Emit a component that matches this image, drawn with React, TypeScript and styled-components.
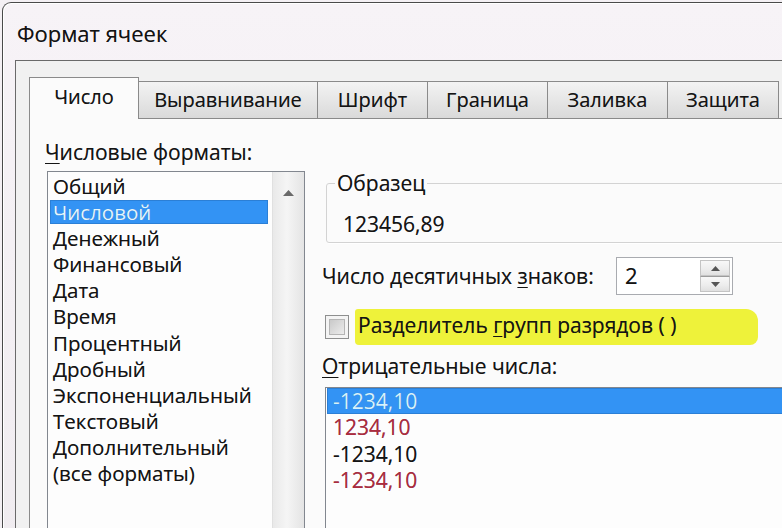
import React from 'react'
import styled, { createGlobalStyle } from 'styled-components'

const GlobalStyle = createGlobalStyle`
  html,
  body {
    margin: 0;
    padding: 0;
    overflow: hidden;
    background: #f4f0f4;
  }

  body {
    font-family: 'Open Sans', 'Noto Sans', 'Liberation Sans', sans-serif;
    color: #141414;
    text-shadow: 0 0 0.6px rgba(0, 0, 0, 0.45);
  }
`

type Tone = 'selected' | 'red' | 'black'

const TABS = [
  { label: 'Число', width: 110 },
  { label: 'Выравнивание', width: 180 },
  { label: 'Шрифт', width: 111 },
  { label: 'Граница', width: 121 },
  { label: 'Заливка', width: 121 },
  { label: 'Защита', width: 112 }
]

const FORMATS = [
  'Общий',
  'Числовой',
  'Денежный',
  'Финансовый',
  'Дата',
  'Время',
  'Процентный',
  'Дробный',
  'Экспоненциальный',
  'Текстовый',
  'Дополнительный',
  '(все форматы)'
]

const NEGATIVES: { text: string; tone: Tone }[] = [
  { text: '-1234,10', tone: 'selected' },
  { text: '1234,10', tone: 'red' },
  { text: '-1234,10', tone: 'black' },
  { text: '-1234,10', tone: 'red' }
]

const TriangleUp = ({ w = 10, h = 5, color = '#5a5a5a' }: { w?: number; h?: number; color?: string }) => (
  <svg width={w} height={h} viewBox={`0 0 ${w} ${h}`}>
    <polygon points={`0,${h} ${w / 2},0 ${w},${h}`} fill={color} />
  </svg>
)

const TriangleDown = ({ w = 8, h = 4, color = '#5a5a5a' }: { w?: number; h?: number; color?: string }) => (
  <svg width={w} height={h} viewBox={`0 0 ${w} ${h}`}>
    <polygon points={`0,0 ${w},0 ${w / 2},${h}`} fill={color} />
  </svg>
)

const App = () => {
  return (
    <>
      <GlobalStyle />
      <Window>
        <TitleBar>Формат ячеек</TitleBar>
        <Client>
          <TabStrip>
            {TABS.map((tab, i) => (
              <Tab key={tab.label} $active={i === 0} $width={tab.width}>
                {tab.label}
              </Tab>
            ))}
          </TabStrip>
          <Panel>
            <LeftColumn>
              <FieldLabel>
                <Mnemonic>Ч</Mnemonic>исловые форматы:
              </FieldLabel>
              <FormatList>
                <FormatItems>
                  {FORMATS.map((name, i) => (
                    <FormatItem key={name} $selected={i === 1}>
                      {name}
                    </FormatItem>
                  ))}
                </FormatItems>
                <ScrollBar>
                  <TriangleUp w={11} h={6} color="#6a6a6a" />
                </ScrollBar>
              </FormatList>
            </LeftColumn>

            <RightColumn>
              <GroupBox>
                <GroupLegend>Образец</GroupLegend>
                <SampleValue>123456,89</SampleValue>
              </GroupBox>

              <DigitsRow>
                <DigitsLabel>
                  Число десятичных <Mnemonic>з</Mnemonic>наков:
                </DigitsLabel>
                <SpinBox>
                  <SpinValue>2</SpinValue>
                  <SpinButtons>
                    <SpinButton>
                      <TriangleUp w={9} h={5} color="#555" />
                    </SpinButton>
                    <SpinButton>
                      <TriangleDown w={9} h={5} color="#555" />
                    </SpinButton>
                  </SpinButtons>
                </SpinBox>
              </DigitsRow>

              <CheckRow>
                <CheckBox />
                <Highlight>
                  Разделитель <Mnemonic>г</Mnemonic>рупп разрядов ( )
                </Highlight>
              </CheckRow>

              <NegativeLabel>
                <Mnemonic>О</Mnemonic>трицательные числа:
              </NegativeLabel>
              <NegativeList>
                {NEGATIVES.map((item, i) => (
                  <NegativeItem key={i} $tone={item.tone}>
                    {item.text}
                  </NegativeItem>
                ))}
              </NegativeList>
            </RightColumn>
          </Panel>
        </Client>
      </Window>
    </>
  )
}

const Window = styled.div`
  width: 820px;
  height: 560px;
  margin: 2px 0 0 2px;
  border-top: 1px solid #4a4a4a;
  border-left: 1px solid #4a4a4a;
  border-top-left-radius: 9px;
  background: linear-gradient(180deg, #f7f3f7 0%, #f0ecf0 100%);
  box-shadow: inset 1px 1px 0 #ffffff;
  display: flex;
  flex-direction: column;
  overflow: hidden;
`

const TitleBar = styled.div`
  flex-shrink: 0;
  height: 57px;
  box-sizing: border-box;
  padding: 3px 0 0 14px;
  display: flex;
  align-items: center;
  font-size: 22px;
  color: #121212;
`

const Client = styled.div`
  flex: 1;
  min-height: 0;
  margin-left: 12px;
  border-top: 1px solid #6a6a6a;
  border-left: 1px solid #6a6a6a;
  background: #f1f1f1;
  padding: 16px 0 0 13px;
  display: flex;
  flex-direction: column;
`

const TabStrip = styled.div`
  flex-shrink: 0;
  display: flex;
  align-items: flex-end;
  height: 42px;
`

const Tab = styled.div<{ $active: boolean; $width: number }>`
  width: ${(p) => p.$width}px;
  height: ${(p) => (p.$active ? 42 : 38)}px;
  box-sizing: border-box;
  margin-left: -1px;
  border: 1px solid #8a8a8a;
  border-bottom: none;
  display: flex;
  align-items: center;
  justify-content: center;
  padding-bottom: ${(p) => (p.$active ? 4 : 2)}px;
  font-size: 20px;
  color: #141414;
  background: ${(p) => (p.$active ? '#fbfbfb' : 'linear-gradient(180deg, #f3f3f3 0%, #e6e6e6 50%, #d9d9d9 100%)')};
  position: ${(p) => (p.$active ? 'relative' : 'static')};
  z-index: ${(p) => (p.$active ? 2 : 'auto')};

  &:first-child {
    margin-left: 0;
  }
`

const Panel = styled.div`
  flex: 1;
  min-height: 0;
  margin-top: -1px;
  border: 1px solid #8a8a8a;
  background: #fbfbfb;
  position: relative;
  z-index: 1;
  display: flex;
  padding: 20px 0 0 15px;
  overflow: hidden;
`

const LeftColumn = styled.div`
  width: 260px;
  flex-shrink: 0;
  display: flex;
  flex-direction: column;
`

const FieldLabel = styled.div`
  font-size: 21px;
  line-height: 26px;
  white-space: nowrap;
`

const Mnemonic = styled.span`
  text-decoration: underline;
  text-underline-offset: 3px;
  text-decoration-thickness: 1px;
`

const FormatList = styled.div`
  flex-shrink: 0;
  margin: 6px 0 0 2px;
  width: 258px;
  height: 420px;
  box-sizing: border-box;
  border: 1px solid #82878f;
  background: #fdfdfd;
  display: flex;
`

const FormatItems = styled.div`
  flex: 1;
  padding: 2px 4px 0 2px;
`

const FormatItem = styled.div<{ $selected: boolean }>`
  height: 24px;
  line-height: 24px;
  margin-bottom: 2.1px;
  padding-left: 3px;
  font-size: 20.5px;
  white-space: nowrap;
  color: ${(p) => (p.$selected ? '#e3f6ff' : '#141414')};
  background: ${(p) => (p.$selected ? '#3393f4' : 'transparent')};
  box-shadow: ${(p) => (p.$selected ? 'inset 0 0 0 1px #2b7fd6' : 'none')};
`

const ScrollBar = styled.div`
  width: 32px;
  border-left: 1px solid #e0e0e0;
  background: linear-gradient(90deg, #e9e9e9 0%, #f5f5f5 45%, #e4e4e4 100%);
  display: flex;
  justify-content: center;
  padding-top: 18px;
  box-sizing: border-box;
`

const RightColumn = styled.div`
  width: 490px;
  flex-shrink: 0;
  margin-left: 17px;
  padding-top: 31px;
  display: flex;
  flex-direction: column;
`

const GroupBox = styled.fieldset`
  margin: 0 0 0 4px;
  min-width: 0;
  border: 1px solid #d3d3d3;
  border-radius: 3px;
  box-shadow: 1px 1px 0 #ffffff;
  padding: 15px 0 5px 8px;
`

const GroupLegend = styled.legend`
  padding: 0 2px;
  font-size: 21px;
  line-height: 26px;
`

const SampleValue = styled.div`
  padding-left: 8px;
  font-size: 21px;
  line-height: 26px;
`

const DigitsRow = styled.div`
  flex-shrink: 0;
  display: flex;
  align-items: center;
  margin-top: 14px;
  height: 38px;
`

const DigitsLabel = styled.div`
  width: 294px;
  font-size: 21px;
  line-height: 26px;
  white-space: nowrap;
`

const SpinBox = styled.div`
  width: 117px;
  height: 38px;
  box-sizing: border-box;
  border: 1px solid #a9abb0;
  background: #ffffff;
  display: flex;
`

const SpinValue = styled.div`
  flex: 1;
  padding-left: 8px;
  font-size: 22px;
  line-height: 35px;
`

const SpinButtons = styled.div`
  width: 30px;
  margin: 2px 2px 2px 0;
  display: flex;
  flex-direction: column;
`

const SpinButton = styled.div`
  flex: 1;
  border: 1px solid #c4c4c4;
  background: linear-gradient(180deg, #f8f8f8 0%, #ececec 60%, #e0e0e0 100%);
  display: flex;
  align-items: center;
  justify-content: center;

  & + & {
    border-top: 1px solid #9c9c9c;
  }
`

const CheckRow = styled.div`
  flex-shrink: 0;
  display: flex;
  align-items: center;
  margin-top: 14px;
  height: 36px;
`

const CheckBox = styled.span`
  width: 24px;
  height: 24px;
  margin-left: 3px;
  box-sizing: border-box;
  border: 1px solid #8e8f8f;
  padding: 4px;
  background: linear-gradient(135deg, #c9c9c9 0%, #ececec 100%) content-box, #f8f8f8;
  box-shadow: inset 0 0 0 3px #f4f4f4, inset 0 0 0 4px #b5b5b5;
`

const Highlight = styled.div`
  margin-left: 6px;
  width: 403px;
  height: 36px;
  box-sizing: border-box;
  padding-left: 3px;
  font-size: 21px;
  line-height: 33px;
  white-space: nowrap;
  background: #eef23a;
  border-radius: 3px 12px 8px 4px;
`

const NegativeLabel = styled.div`
  margin-top: 8px;
  font-size: 21px;
  line-height: 26px;
`

const NegativeList = styled.div`
  flex-shrink: 0;
  margin: 8px 0 0 3px;
  height: 200px;
  box-sizing: border-box;
  border: 1px solid #82878f;
  border-right: none;
  background: #fdfdfd;
  padding: 0 0 0 1px;
`

const toneColor: Record<Tone, string> = {
  selected: '#d6f3ff',
  red: '#ad2b3f',
  black: '#141414'
}

const NegativeItem = styled.div<{ $tone: Tone }>`
  height: 26.3px;
  line-height: 26px;
  padding-left: 6px;
  font-size: 21px;
  color: ${(p) => toneColor[p.$tone]};
  background: ${(p) => (p.$tone === 'selected' ? '#3393f4' : 'transparent')};
  box-shadow: ${(p) => (p.$tone === 'selected' ? 'inset 0 0 0 1px #2b7fd6' : 'none')};
`

export default App
